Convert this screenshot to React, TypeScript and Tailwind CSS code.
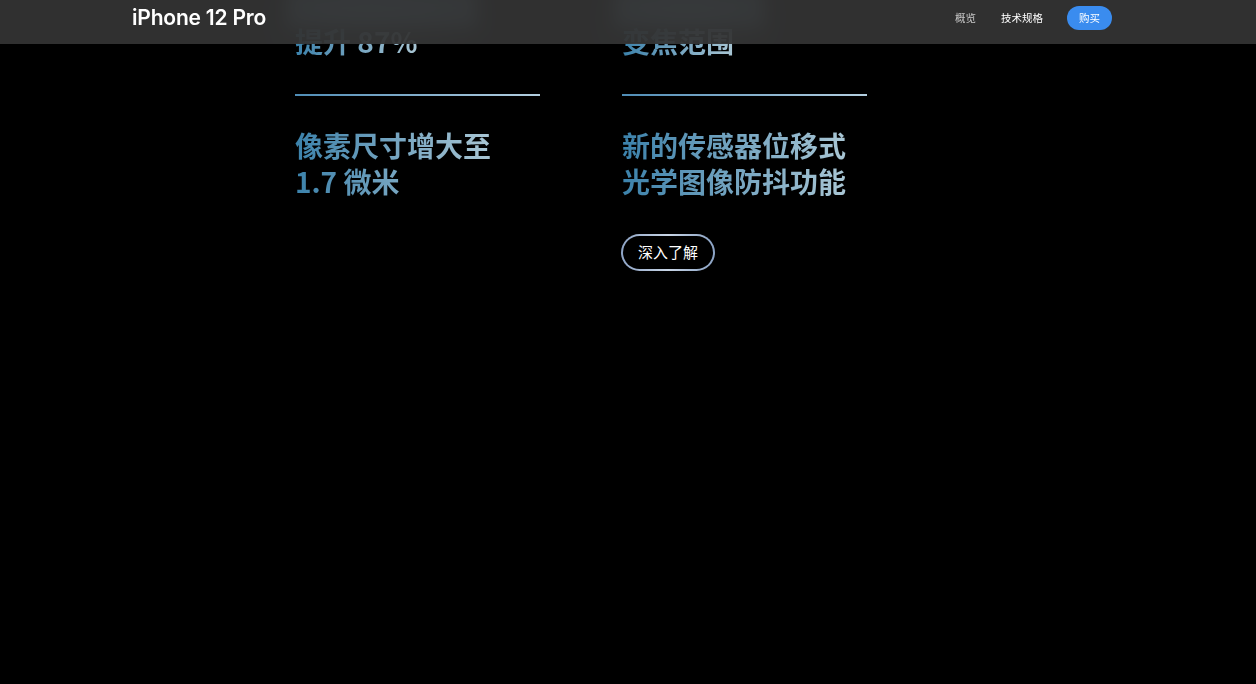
import React from "react";

const cjk = { fontFamily: '"Noto Sans CJK SC", "Noto Sans", sans-serif' };

const columns = [
  { ghost: "w-[190px]", top: "提升 87%", bottom: ["像素尺寸增大至", "1.7 微米"], cta: false },
  { ghost: "w-[150px]", top: "变焦范围", bottom: ["新的传感器位移式", "光学图像防抖功能"], cta: true },
];

const Headline = ({ lines }: { lines: string[] }) => (
  <h3
    style={cjk}
    className="inline-block bg-gradient-to-r from-[#3b82ab] to-[#a9c6d4] bg-clip-text text-[28px] font-bold leading-[36px] text-transparent"
  >
    {lines.map((l) => (
      <span key={l} className="block">
        {l}
      </span>
    ))}
  </h3>
);

const App = () => {
  return (
    <div className="h-[684px] overflow-hidden bg-black">
      {/* sticky nav */}
      <header className="fixed left-0 right-0 top-0 z-50 h-[44px] bg-[rgba(52,52,52,0.92)] backdrop-blur-2xl">
        <div className="mx-auto flex h-[36px] w-[992px] items-center justify-between pr-3">
          <span
            style={{ fontFamily: "Inter, sans-serif" }}
            className="text-[21px] font-semibold tracking-[-0.2px] text-white"
          >
            iPhone 12 Pro
          </span>
          <nav style={cjk} className="flex items-center text-[10.5px]">
            <a className="text-[#c8c8c8]">概览</a>
            <a className="ml-[25px] text-white">技术规格</a>
            <a className="ml-[24px] flex h-[24px] items-center rounded-full bg-[#3a8cef] px-[12px] text-white">
              购买
            </a>
          </nav>
        </div>
      </header>

      {/* highlights, scrolled partly under the nav */}
      <main className="mx-auto -mt-[9px] w-[992px] pl-[163px]">
        <div className="flex gap-[82px]">
          {columns.map((c, i) => (
            <div key={i} className="flex w-[245px] flex-col items-start">
              {/* first headline line, only seen blurred through the nav */}
              <div className={`-ml-[8px] h-[36px] ${c.ghost} bg-[#5a7d94] blur-[8px]`} />
              <div className="-mt-[4px]">
                <Headline lines={[c.top]} />
              </div>
              <div className="mt-[35px] h-[2px] w-[245px] bg-gradient-to-r from-[#4f8db6] to-[#b4cfe0]" />
              <div className="mt-[31px]">
                <Headline lines={c.bottom} />
              </div>
              {c.cta && (
                <div className="-ml-[1px] mt-[35px] rounded-full bg-gradient-to-r from-[#8ea4c6] via-[#c9d6e6] to-[#8aa2c4] p-[2px]">
                  <button
                    style={cjk}
                    className="flex h-[33px] items-center rounded-full bg-black px-[15px] text-[15px] text-white"
                  >
                    深入了解
                  </button>
                </div>
              )}
            </div>
          ))}
        </div>
      </main>
    </div>
  );
};

export default App;
